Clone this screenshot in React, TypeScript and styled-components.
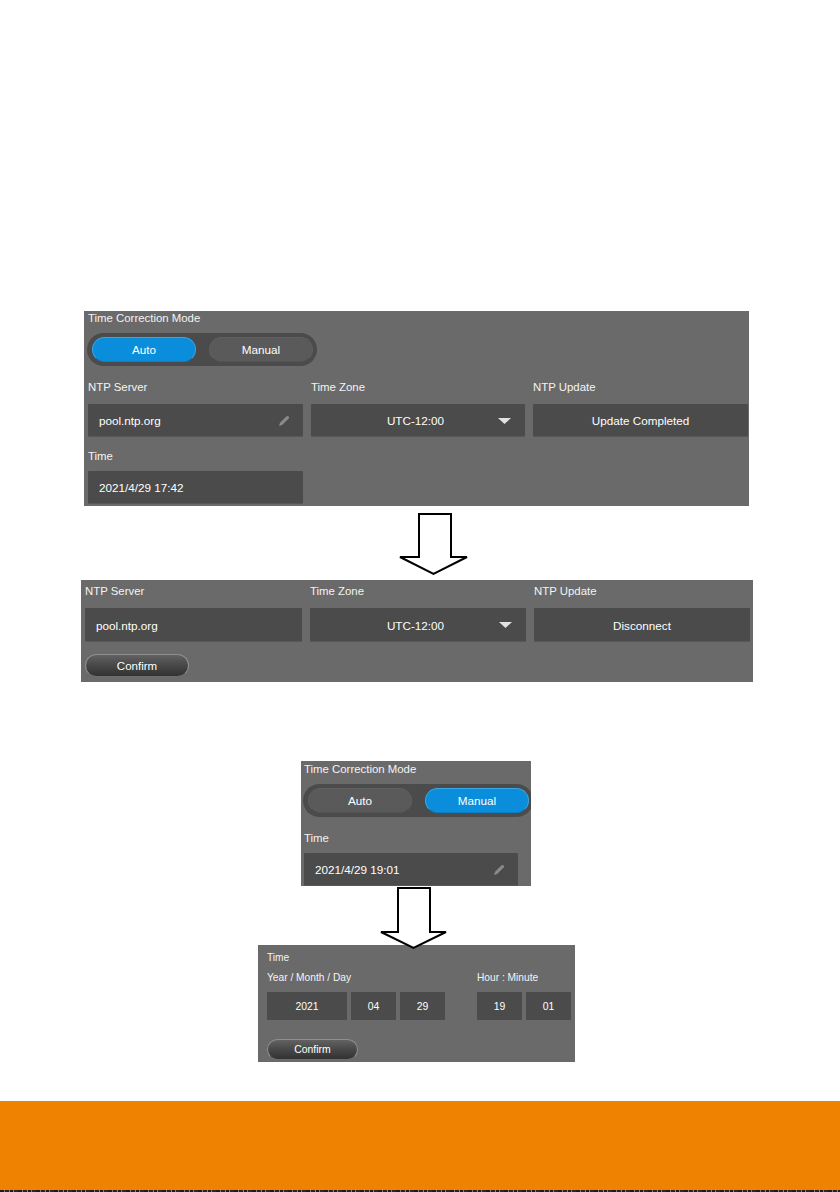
import React from "react";
import styled, { createGlobalStyle } from "styled-components";

const GlobalStyle = createGlobalStyle`
  html, body {
    margin: 0;
    padding: 0;
    background: #ffffff;
  }
  body {
    font-family: "Liberation Sans", Arial, sans-serif;
  }
`;

const Page = styled.div`
  width: 840px;
  min-height: 1192px;
  box-sizing: border-box;
  padding-top: 311px;
  background: #ffffff;
  display: flex;
  flex-direction: column;
`;

const Panel = styled.section<{
  $x: number;
  $w: number;
  $h: number;
  $pt: number;
  $pl: number;
  $mt?: number;
}>`
  box-sizing: border-box;
  flex-shrink: 0;
  margin-left: ${(p) => p.$x}px;
  margin-top: ${(p) => p.$mt ?? 0}px;
  width: ${(p) => p.$w}px;
  height: ${(p) => p.$h}px;
  padding: ${(p) => p.$pt}px 0 0 ${(p) => p.$pl}px;
  background: #6a6a6a;
  overflow: hidden;
  display: flex;
  flex-direction: column;
  align-items: flex-start;
`;

const Label = styled.div<{ $mt?: number; $small?: boolean }>`
  margin-top: ${(p) => p.$mt ?? 0}px;
  font-size: ${(p) => (p.$small ? "10.2px" : "11.4px")};
  line-height: ${(p) => (p.$small ? "12px" : "14px")};
  color: #f4f4f4;
  white-space: nowrap;
`;

const Toggle = styled.div<{ $mt: number }>`
  flex-shrink: 0;
  display: flex;
  gap: 13px;
  box-sizing: border-box;
  height: 33px;
  margin-top: ${(p) => p.$mt}px;
  margin-left: -1px;
  padding: 4px 4px 4px 5px;
  border-radius: 17px;
  background: #4b4b4b;
`;

const ToggleOption = styled.div<{ $active?: boolean }>`
  box-sizing: border-box;
  width: 104px;
  height: 25px;
  border-radius: 13px;
  display: flex;
  align-items: center;
  justify-content: center;
  font-size: 11.7px;
  color: #ffffff;
  background: ${(p) => (p.$active ? "#0a8ddb" : "#5a5a5a")};
  border: 1px solid ${(p) => (p.$active ? "#3aa6e6" : "#5f5f5f")};
  border-bottom-color: ${(p) => (p.$active ? "#0a7fc6" : "#535353")};
`;

const FieldGrid = styled.div<{ $cols: string; $mt: number }>`
  display: grid;
  grid-template-columns: ${(p) => p.$cols};
  column-gap: 8px;
  margin-top: ${(p) => p.$mt}px;
`;

const Field = styled.div<{ $w?: number }>`
  display: flex;
  flex-direction: column;
  width: ${(p) => (p.$w ? `${p.$w}px` : "auto")};
`;

const ValueBox = styled.div<{ $h: number; $mt: number; $w?: number }>`
  box-sizing: border-box;
  height: ${(p) => p.$h}px;
  width: ${(p) => (p.$w ? `${p.$w}px` : "auto")};
  margin-top: ${(p) => p.$mt}px;
  padding: 0 13px 0 11px;
  display: flex;
  align-items: center;
  background: #4b4b4b;
  border-radius: 1px;
  box-shadow: inset 0 -1px 0 rgba(255, 255, 255, 0.07);
  color: #ffffff;
  font-size: 11.7px;
  white-space: nowrap;
`;

const CenterBox = styled(ValueBox)`
  justify-content: center;
  padding: 0;
`;

const SelectBox = styled(ValueBox)`
  display: grid;
  grid-template-columns: 1fr auto;
  padding: 0 14px 0 22px;
`;

const SelectText = styled.span`
  text-align: center;
`;

const Trailing = styled.span`
  margin-left: auto;
  display: flex;
  align-items: center;
`;

const ConfirmButton = styled.div<{ $w: number; $h: number; $mt: number; $small?: boolean }>`
  box-sizing: border-box;
  flex-shrink: 0;
  width: ${(p) => p.$w}px;
  height: ${(p) => p.$h}px;
  margin-top: ${(p) => p.$mt}px;
  border-radius: ${(p) => p.$h / 2}px;
  border: 1px solid #8e8e8e;
  border-bottom-color: #6d6d6d;
  background: linear-gradient(#626262 0%, #4a4a4a 45%, #323232 100%);
  display: flex;
  align-items: center;
  justify-content: center;
  color: #ffffff;
  font-size: ${(p) => (p.$small ? "10.4px" : "11.5px")};
`;

const DateRow = styled.div`
  display: flex;
  gap: 32px;
  margin-top: 8px;
`;

const DateGroup = styled.div`
  display: flex;
  flex-direction: column;
`;

const DateBoxes = styled.div`
  display: flex;
  gap: 4px;
  margin-top: 8px;
`;

const DateBox = styled.div<{ $w: number }>`
  box-sizing: border-box;
  width: ${(p) => p.$w}px;
  height: 28px;
  background: #4b4b4b;
  display: flex;
  align-items: center;
  justify-content: center;
  color: #ffffff;
  font-size: 10.4px;
`;

const ArrowRow = styled.div<{ $h: number; $x: number; $pt: number }>`
  position: relative;
  z-index: 1;
  flex-shrink: 0;
  height: ${(p) => p.$h}px;
  padding: ${(p) => p.$pt}px 0 0 ${(p) => p.$x}px;
  box-sizing: border-box;

  svg {
    display: block;
    overflow: visible;
  }
`;

const Footer = styled.footer`
  flex-shrink: 0;
  margin-top: 39px;
  display: flex;
  flex-direction: column;
`;

const FooterBand = styled.div`
  height: 89px;
  background: #ef8200;
`;

const FooterEdge = styled.div`
  height: 2px;
  background: repeating-linear-gradient(
    90deg,
    #1c1c1c 0 4px,
    #8a7296 4px 5px,
    #262626 5px 9px,
    #6d9a74 9px 10px,
    #1c1c1c 10px 13px,
    #b8763e 13px 14px,
    #2a2a2a 14px 18px
  );
`;

const Pencil = () => (
  <svg width="12" height="12" viewBox="0 0 12 12">
    <path
      d="M1 11 L2 7.8 L8.4 1.4 Q9.5 0.4 10.6 1.4 Q11.6 2.5 10.6 3.6 L4.2 10 Z"
      fill="#8a8a8a"
    />
  </svg>
);

const Caret = () => (
  <svg width="13" height="6" viewBox="0 0 13 6">
    <path d="M0 0 H13 L6.5 6 Z" fill="#e2e2e2" />
  </svg>
);

const DownArrow = ({ w, stemL, stemR, base, tip }: { w: number; stemL: number; stemR: number; base: number; tip: number }) => (
  <svg width={w} height={tip + 2} viewBox={`0 0 ${w} ${tip + 2}`}>
    <polygon
      points={`${stemL},2 ${stemR},2 ${stemR},${base} ${w - 2},${base} ${(w) / 2},${tip} 2,${base} ${stemL},${base}`}
      fill="#ffffff"
      stroke="#000000"
      strokeWidth="2"
      strokeLinejoin="miter"
    />
  </svg>
);

export default function App() {
  return (
    <>
      <GlobalStyle />
      <Page>
        {/* Auto mode: NTP settings */}
        <Panel $x={84} $w={665} $h={195} $pt={0} $pl={4}>
          <Label>Time Correction Mode</Label>
          <Toggle $mt={8}>
            <ToggleOption $active>Auto</ToggleOption>
            <ToggleOption>Manual</ToggleOption>
          </Toggle>
          <FieldGrid $cols="215px 214px 215px" $mt={14}>
            <Field>
              <Label>NTP Server</Label>
              <ValueBox $h={33} $mt={10}>
                pool.ntp.org
                <Trailing>
                  <Pencil />
                </Trailing>
              </ValueBox>
            </Field>
            <Field>
              <Label>Time Zone</Label>
              <SelectBox $h={33} $mt={10}>
                <SelectText>UTC-12:00</SelectText>
                <Caret />
              </SelectBox>
            </Field>
            <Field>
              <Label>NTP Update</Label>
              <CenterBox $h={33} $mt={10}>
                Update Completed
              </CenterBox>
            </Field>
          </FieldGrid>
          <Field $w={215}>
            <Label $mt={12}>Time</Label>
            <ValueBox $h={33} $mt={8}>
              2021/4/29 17:42
            </ValueBox>
          </Field>
        </Panel>

        <ArrowRow $h={74} $x={398} $pt={6}>
          <DownArrow w={71} stemL={21} stemR={53} base={45} tip={62} />
        </ArrowRow>

        {/* Editing the NTP server */}
        <Panel $x={81} $w={672} $h={102} $pt={4} $pl={4}>
          <FieldGrid $cols="217px 216px 216px" $mt={0}>
            <Field>
              <Label>NTP Server</Label>
              <ValueBox $h={34} $mt={10}>
                pool.ntp.org
              </ValueBox>
            </Field>
            <Field>
              <Label>Time Zone</Label>
              <SelectBox $h={34} $mt={10}>
                <SelectText>UTC-12:00</SelectText>
                <Caret />
              </SelectBox>
            </Field>
            <Field>
              <Label>NTP Update</Label>
              <CenterBox $h={34} $mt={10}>
                Disconnect
              </CenterBox>
            </Field>
          </FieldGrid>
          <ConfirmButton $w={104} $h={23} $mt={12}>
            Confirm
          </ConfirmButton>
        </Panel>

        {/* Manual mode */}
        <Panel $x={301} $w={230} $h={125} $pt={1} $pl={3} $mt={79}>
          <Label>Time Correction Mode</Label>
          <Toggle $mt={8}>
            <ToggleOption>Auto</ToggleOption>
            <ToggleOption $active>Manual</ToggleOption>
          </Toggle>
          <Field $w={214}>
            <Label $mt={14}>Time</Label>
            <ValueBox $h={33} $mt={8}>
              2021/4/29 19:01
              <Trailing>
                <Pencil />
              </Trailing>
            </ValueBox>
          </Field>
        </Panel>

        <ArrowRow $h={59} $x={379} $pt={0}>
          <DownArrow w={69} stemL={19} stemR={51} base={46} tip={62} />
        </ArrowRow>

        {/* Manual date and time entry */}
        <Panel $x={258} $w={317} $h={117} $pt={7} $pl={9}>
          <Label $small>Time</Label>
          <DateRow>
            <DateGroup>
              <Label $small>Year / Month / Day</Label>
              <DateBoxes>
                <DateBox $w={80}>2021</DateBox>
                <DateBox $w={45}>04</DateBox>
                <DateBox $w={45}>29</DateBox>
              </DateBoxes>
            </DateGroup>
            <DateGroup>
              <Label $small>Hour : Minute</Label>
              <DateBoxes>
                <DateBox $w={45}>19</DateBox>
                <DateBox $w={45}>01</DateBox>
              </DateBoxes>
            </DateGroup>
          </DateRow>
          <ConfirmButton $w={91} $h={21} $mt={19} $small>
            Confirm
          </ConfirmButton>
        </Panel>

        <Footer>
          <FooterBand />
          <FooterEdge />
        </Footer>
      </Page>
    </>
  );
}
